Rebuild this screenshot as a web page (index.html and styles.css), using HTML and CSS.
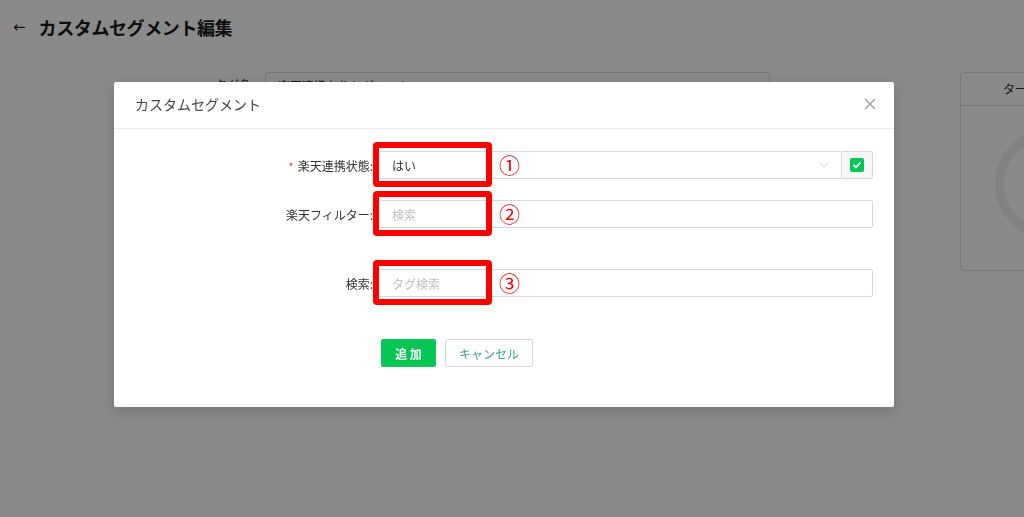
FILE: index.html
```html
<!DOCTYPE html>
<html lang="ja">
<head>
  <meta charset="UTF-8">
  <meta name="viewport" content="width=device-width, initial-scale=1.0">
  <title>カスタムセグメント編集</title>
  <link rel="stylesheet" href="styles.css">
</head>
<body>
  <div class="page">
    <div class="page-header">
      <span class="back">&larr;</span>
      <h1>カスタムセグメント編集</h1>
    </div>
    <div class="page-body">
      <div class="tag-row">
        <label>タグ名</label>
        <div class="tag-input">楽天連携有りセグメント</div>
      </div>
      <div class="side-card">
        <div class="side-card-head">ターゲット</div>
        <div class="side-card-body"><div class="donut"></div></div>
      </div>
    </div>
  </div>

  <div class="overlay"></div>

  <div class="modal">
    <div class="modal-head">
      <span>カスタムセグメント</span>
      <svg class="close" width="12" height="12" viewBox="0 0 12 12"><path d="M1 1L11 11M11 1L1 11" stroke="#999" stroke-width="1.2" fill="none"/></svg>
    </div>
    <div class="modal-body">
      <div class="form-row">
        <label class="form-label"><span class="req">*</span>楽天連携状態:</label>
        <div class="field">
          <div class="select">
            <span>はい</span>
            <svg width="10" height="6" viewBox="0 0 10 6"><path d="M1 1L5 5L9 1" stroke="#ccc" stroke-width="1" fill="none"/></svg>
          </div>
          <div class="check-btn">
            <span class="checkbox"><svg width="10" height="8" viewBox="0 0 10 8"><path d="M1.5 4L4 6.3L8.5 1.5" stroke="#fff" stroke-width="1.8" fill="none"/></svg></span>
          </div>
          <div class="mark">
            <div class="mark-box"></div>
            <span class="mark-num">①</span>
          </div>
        </div>
      </div>
      <div class="form-row">
        <label class="form-label">楽天フィルター:</label>
        <div class="field">
          <div class="input placeholder">検索</div>
          <div class="mark">
            <div class="mark-box"></div>
            <span class="mark-num">②</span>
          </div>
        </div>
      </div>
      <div class="form-row row-gap">
        <label class="form-label">検索:</label>
        <div class="field">
          <div class="input placeholder">タグ検索</div>
          <div class="mark">
            <div class="mark-box"></div>
            <span class="mark-num">③</span>
          </div>
        </div>
      </div>
      <div class="actions">
        <button class="btn-primary">追 加</button>
        <button class="btn-default">キャンセル</button>
      </div>
    </div>
  </div>
</body>
</html>
```

FILE: styles.css
```css
* {
    margin: 0;
    padding: 0;
    box-sizing: border-box;
    font-family: "Noto Sans CJK JP", "Noto Sans", sans-serif;
}

body {
    width: 1024px;
    height: 517px;
    overflow: hidden;
    background: #fff;
    color: #333;
}

.page {
    overflow: hidden;
    height: 517px;
}

.page-header {
    display: flex;
    align-items: center;
    gap: 13px;
    padding: 0 0 2px 13px;
    height: 56px;
}

.back {
    font-size: 15px;
    color: #222;
    font-family: "DejaVu Sans", sans-serif;
}

.page-header h1 {
    font-size: 18px;
    font-weight: bold;
    color: #1a1a1a;
    letter-spacing: -0.4px;
}

.page-body {
    display: flex;
    padding-top: 16px;
}

.tag-row {
    display: flex;
    flex-shrink: 0;
    gap: 14px;
    padding-left: 215px;
}

.tag-row label {
    font-size: 12px;
    padding-top: 4px;
}

.tag-input {
    width: 505px;
    height: 30px;
    border: 1px solid #d9d9d9;
    border-radius: 3px;
    font-size: 12px;
    padding: 4px 12px;
}

.side-card {
    margin-left: 190px;
    width: 90px;
    height: 199px;
    border: 1px solid #ddd;
    border-radius: 4px;
    overflow: hidden;
    flex-shrink: 0;
}

.side-card-head {
    height: 33px;
    border-bottom: 1px solid #ddd;
    font-size: 12px;
    padding: 7px 0 0 42px;
    white-space: nowrap;
}

.side-card-body {
    padding: 23px 0 0 34px;
}

.donut {
    width: 110px;
    height: 110px;
    border: 9px solid #f0f0f0;
    border-radius: 50%;
}

.overlay {
    position: fixed;
    inset: 0;
    background: rgba(0, 0, 0, 0.46);
}

.modal {
    position: fixed;
    left: 114px;
    top: 82px;
    width: 780px;
    height: 325px;
    background: #fff;
    border-radius: 2px;
    box-shadow: 0 4px 14px rgba(0, 0, 0, 0.18);
}

.modal-head {
    height: 47px;
    border-bottom: 1px solid #ebebeb;
    display: flex;
    align-items: center;
    justify-content: space-between;
    padding: 0 18px 2px 21px;
    font-size: 14px;
    color: #444;
}

.modal-body {
    display: flex;
    flex-direction: column;
    padding: 22px 21px 0 0;
}

.form-row {
    display: flex;
    align-items: center;
    height: 28px;
    margin-bottom: 21px;
}

.form-row.row-gap {
    margin-top: 20px;
}

.form-label {
    width: 264px;
    padding-right: 5px;
    text-align: right;
    font-size: 12px;
    color: #333;
}

.req {
    color: #f04134;
    margin-right: 4px;
    font-size: 11px;
}

.field {
    flex: 1;
    display: flex;
    height: 28px;
    position: relative;
}

.select, .input {
    flex: 1;
    height: 28px;
    border: 1px solid #d9d9d9;
    border-radius: 2px;
    display: flex;
    align-items: center;
    justify-content: space-between;
    padding: 0 12px 0 13px;
    font-size: 12px;
    color: #333;
}

.input.placeholder {
    color: #bfbfbf;
}

.check-btn {
    width: 31px;
    border: 1px solid #d9d9d9;
    border-left: none;
    border-radius: 0 2px 2px 0;
    background: #f7f7f7;
    display: flex;
    align-items: center;
    justify-content: center;
}

.checkbox {
    width: 14px;
    height: 14px;
    background: #06c755;
    border-radius: 2px;
    display: flex;
    align-items: center;
    justify-content: center;
}

.mark {
    position: absolute;
    left: -5px;
    top: -9px;
    display: flex;
    align-items: center;
    gap: 7px;
}

.mark-box {
    width: 119px;
    height: 45px;
    border: 6px solid #ff0000;
    border-radius: 4px;
}

.mark-num {
    color: #ff0000;
    font-size: 21px;
    line-height: 1;
}

.actions {
    display: flex;
    gap: 9px;
    padding: 21px 0 0 267px;
}

.actions button {
    height: 28px;
    border-radius: 2px;
    font-size: 12px;
    cursor: pointer;
}

.btn-primary {
    width: 55px;
    background: #06c755;
    border: none;
    color: #fff;
    font-weight: bold;
}

.btn-default {
    width: 88px;
    background: #fff;
    border: 1px solid #d9d9d9;
    color: #3a9f96;
}
```
